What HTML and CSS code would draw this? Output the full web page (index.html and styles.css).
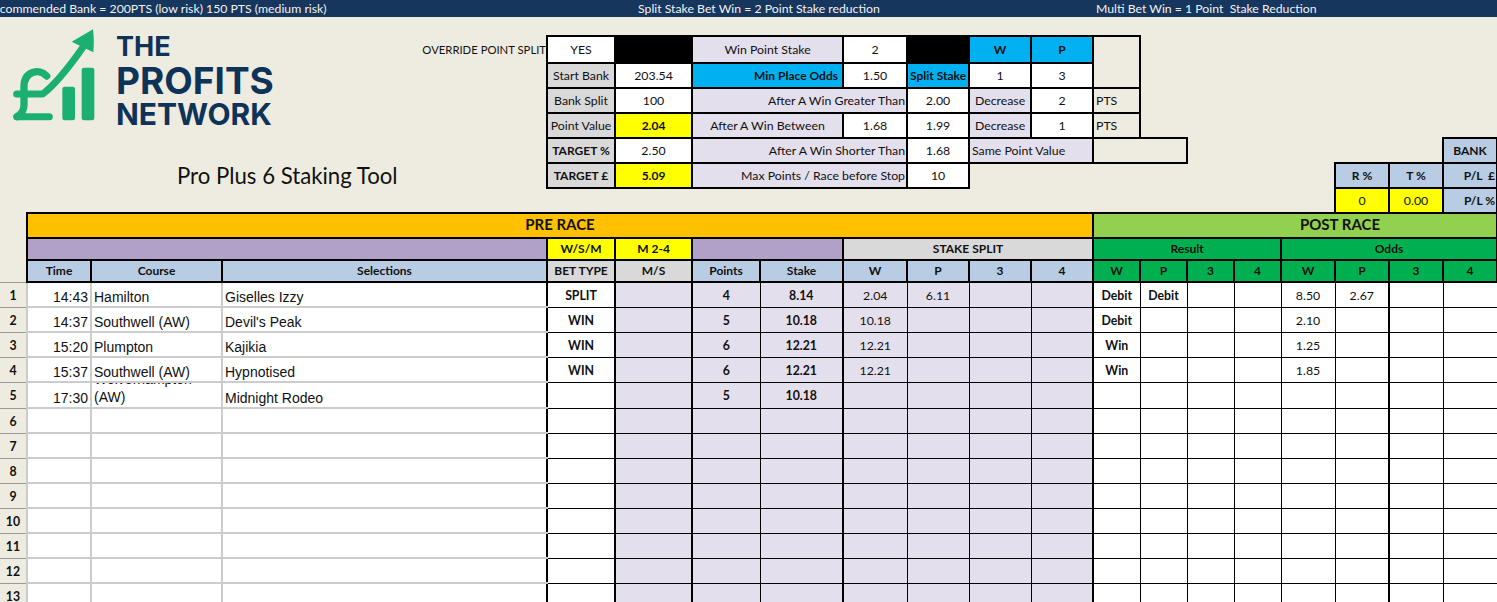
FILE: index.html
```html
<!DOCTYPE html>
<html lang="en">
<head>
<meta charset="utf-8">
<title>Pro Plus 6 Staking Tool</title>
<link rel="stylesheet" href="styles.css">
</head>
<body>
<div class="ticker">
  <div class="tick tick-a"><span>Recommended Bank = 200PTS (low risk) 150 PTS (medium risk)</span></div>
  <div class="tick tick-b">Split Stake Bet Win = 2 Point Stake reduction</div>
  <div class="tick tick-c">Multi Bet Win = 1 Point&nbsp; Stake Reduction</div>
</div>
<table class="sheet">
  <colgroup>
    <col class="w27"><col class="w64"><col class="w131"><col class="w325"><col class="w68"><col class="w77"><col class="w68"><col class="w83"><col class="w64"><col class="w62"><col class="w62"><col class="w62"><col class="w47"><col class="w47"><col class="w47"><col class="w47"><col class="w54"><col class="w54"><col class="w54"><col class="w54">
  </colgroup>
  <tbody class="panel">
    <tr class="h19">
      <td colspan="4" rowspan="8" class="brandcell">
        <div class="brand">
          <div class="logo">
            <svg class="mark" viewBox="0 0 300 330" width="100" height="110" aria-hidden="true">
              <path d="M140 168C128 156 112 152 100 157C80 163 72 180 72 200V255C72 272 64 282 52 290" fill="none" stroke="#1BB071" stroke-width="22" stroke-linecap="round"/>
              <path d="M50 290H148" fill="none" stroke="#1BB071" stroke-width="21" stroke-linecap="round"/>
              <path d="M50 222H128C170 190 215 130 250 80" fill="none" stroke="#1BB071" stroke-width="21" stroke-linecap="round" stroke-linejoin="round"/>
              <path d="M215 65L279 28C282 50 282 75 280 97Z" fill="#1BB071"/>
              <rect x="187" y="200" width="38" height="101" rx="7" fill="#1BB071"/>
              <rect x="245" y="143" width="38" height="158" rx="7" fill="#1BB071"/>
            </svg>
            <div class="wordmark">
              <div class="wm-the">THE</div>
              <div class="wm-profits">PROFITS</div>
              <div class="wm-network">NETWORK</div>
            </div>
          </div>
          <div class="override">OVERRIDE POINT SPLIT</div>
          <div class="title">Pro Plus 6 Staking Tool</div>
        </div>
      </td>
      <td colspan="16"></td>
    </tr>
    <tr class="h26">
      <td class="b c white">YES</td>
      <td class="b blk"></td>
      <td colspan="2" class="b c lav">Win Point Stake</td>
      <td class="b c white">2</td>
      <td class="b blk"></td>
      <td class="b c sky strong">W</td>
      <td class="b c sky strong">P</td>
      <td rowspan="2" class="b"></td>
      <td colspan="7"></td>
    </tr>
    <tr class="h25">
      <td class="b c grey">Start Bank</td>
      <td class="b c white">203.54</td>
      <td colspan="2" class="b r sky strong odds">Min Place Odds</td>
      <td class="b c white">1.50</td>
      <td class="b c sky strong">Split Stake</td>
      <td class="b c white">1</td>
      <td class="b c white">3</td>
      <td colspan="7"></td>
    </tr>
    <tr class="h25">
      <td class="b c grey">Bank Split</td>
      <td class="b c white">100</td>
      <td colspan="3" class="b r lav">After A Win Greater Than</td>
      <td class="b c white">2.00</td>
      <td class="b c lav">Decrease</td>
      <td class="b c white">2</td>
      <td class="b l">PTS</td>
      <td colspan="7"></td>
    </tr>
    <tr class="h25">
      <td class="b c grey">Point Value</td>
      <td class="b c yellow strong">2.04</td>
      <td colspan="2" class="b c lav">After A Win Between</td>
      <td class="b c white">1.68</td>
      <td class="b c white">1.99</td>
      <td class="b c lav">Decrease</td>
      <td class="b c white">1</td>
      <td class="b l">PTS</td>
      <td colspan="7"></td>
    </tr>
    <tr class="h25">
      <td class="b c grey strong">TARGET %</td>
      <td class="b c white">2.50</td>
      <td colspan="3" class="b r lav">After A Win Shorter Than</td>
      <td class="b c white">1.68</td>
      <td colspan="2" class="b l lav">Same Point Value</td>
      <td colspan="2" class="b"></td>
      <td colspan="5"></td>
      <td class="b c steel strong">BANK</td>
    </tr>
    <tr class="h25">
      <td class="b c grey strong">TARGET £</td>
      <td class="b c yellow strong">5.09</td>
      <td colspan="3" class="b r lav">Max Points / Race before Stop</td>
      <td class="b c white">10</td>
      <td colspan="7"></td>
      <td class="b c steel strong">R %</td>
      <td class="b c steel strong">T %</td>
      <td class="b r steel strong">P/L&nbsp; £</td>
    </tr>
    <tr class="h25">
      <td colspan="13"></td>
      <td class="b c yellow">0</td>
      <td class="b c yellow">0.00</td>
      <td class="b r steel strong">P/L %</td>
    </tr>
  </tbody>
  <tbody class="heads">
    <tr class="h25">
      <td></td>
      <td colspan="11" class="b c orange banner">PRE RACE</td>
      <td colspan="8" class="b c lime banner banner-post">POST RACE</td>
    </tr>
    <tr class="h22">
      <td></td>
      <td colspan="3" class="b purple"></td>
      <td class="b c yellow strong">W/S/M</td>
      <td class="b c yellow strong">M 2-4</td>
      <td colspan="2" class="b purple"></td>
      <td colspan="4" class="b c grey strong">STAKE SPLIT</td>
      <td colspan="4" class="b c green strong">Result</td>
      <td colspan="4" class="b c green strong">Odds</td>
    </tr>
    <tr class="h22">
      <td></td>
      <th class="b steel">Time</th><th class="b steel">Course</th><th class="b steel">Selections</th>
      <th class="b grey">BET TYPE</th><th class="b grey">M/S</th>
      <th class="b steel">Points</th><th class="b steel">Stake</th>
      <th class="b steel">W</th><th class="b steel">P</th><th class="b steel">3</th><th class="b steel">4</th>
      <th class="b green">W</th><th class="b green">P</th><th class="b green">3</th><th class="b green">4</th>
      <th class="b green">W</th><th class="b green">P</th><th class="b green">3</th><th class="b green">4</th>
    </tr>
  </tbody>
  <tbody class="rows">
    <tr><td>1</td><td>14:43</td><td>Hamilton</td><td>Giselles Izzy</td><td>SPLIT</td><td></td><td>4</td><td>8.14</td><td>2.04</td><td>6.11</td><td></td><td></td><td>Debit</td><td>Debit</td><td></td><td></td><td>8.50</td><td>2.67</td><td></td><td></td></tr>
    <tr><td>2</td><td>14:37</td><td>Southwell (AW)</td><td>Devil's Peak</td><td>WIN</td><td></td><td>5</td><td>10.18</td><td>10.18</td><td></td><td></td><td></td><td>Debit</td><td></td><td></td><td></td><td>2.10</td><td></td><td></td><td></td></tr>
    <tr><td>3</td><td>15:20</td><td>Plumpton</td><td>Kajikia</td><td>WIN</td><td></td><td>6</td><td>12.21</td><td>12.21</td><td></td><td></td><td></td><td>Win</td><td></td><td></td><td></td><td>1.25</td><td></td><td></td><td></td></tr>
    <tr><td>4</td><td>15:37</td><td>Southwell (AW)</td><td>Hypnotised</td><td>WIN</td><td></td><td>6</td><td>12.21</td><td>12.21</td><td></td><td></td><td></td><td>Win</td><td></td><td></td><td></td><td>1.85</td><td></td><td></td><td></td></tr>
    <tr><td>5</td><td>17:30</td><td><div class="clip"><div>Wolverhampton</div><div>(AW)</div></div></td><td>Midnight Rodeo</td><td></td><td></td><td>5</td><td>10.18</td><td></td><td></td><td></td><td></td><td></td><td></td><td></td><td></td><td></td><td></td><td></td><td></td></tr>
    <tr><td>6</td><td></td><td></td><td></td><td></td><td></td><td></td><td></td><td></td><td></td><td></td><td></td><td></td><td></td><td></td><td></td><td></td><td></td><td></td><td></td></tr>
    <tr><td>7</td><td></td><td></td><td></td><td></td><td></td><td></td><td></td><td></td><td></td><td></td><td></td><td></td><td></td><td></td><td></td><td></td><td></td><td></td><td></td></tr>
    <tr><td>8</td><td></td><td></td><td></td><td></td><td></td><td></td><td></td><td></td><td></td><td></td><td></td><td></td><td></td><td></td><td></td><td></td><td></td><td></td><td></td></tr>
    <tr><td>9</td><td></td><td></td><td></td><td></td><td></td><td></td><td></td><td></td><td></td><td></td><td></td><td></td><td></td><td></td><td></td><td></td><td></td><td></td><td></td></tr>
    <tr><td>10</td><td></td><td></td><td></td><td></td><td></td><td></td><td></td><td></td><td></td><td></td><td></td><td></td><td></td><td></td><td></td><td></td><td></td><td></td><td></td></tr>
    <tr><td>11</td><td></td><td></td><td></td><td></td><td></td><td></td><td></td><td></td><td></td><td></td><td></td><td></td><td></td><td></td><td></td><td></td><td></td><td></td><td></td></tr>
    <tr><td>12</td><td></td><td></td><td></td><td></td><td></td><td></td><td></td><td></td><td></td><td></td><td></td><td></td><td></td><td></td><td></td><td></td><td></td><td></td><td></td></tr>
    <tr><td>13</td><td></td><td></td><td></td><td></td><td></td><td></td><td></td><td></td><td></td><td></td><td></td><td></td><td></td><td></td><td></td><td></td><td></td><td></td><td></td></tr>
  </tbody>
</table>
</body>
</html>
```
FILE: styles.css
```css
html, body { margin: 0; padding: 0; height: 602px; overflow: hidden; background: #EEECE1; }
body { font-family: "Lato", "Liberation Sans", sans-serif; color: #111; width: 1497px; }

.ticker { display: flex; height: 17px; background: #17365D; color: #F2F2F2; font-size: 12.25px; line-height: 17px; white-space: nowrap; overflow: hidden; }
.tick { flex: none; overflow: hidden; }
.tick-a { width: 638px; }
.tick-a span { display: block; margin-left: -14px; }
.tick-b { width: 458px; }
.tick-c { width: 401px; }

.sheet { border-collapse: collapse; table-layout: fixed; width: 1497px; font-size: 12.3px; }
.w27 { width: 27px; } .w64 { width: 64px; } .w131 { width: 131px; } .w325 { width: 325px; }
.w68 { width: 68px; } .w77 { width: 77px; } .w83 { width: 83px; } .w62 { width: 62px; }
.w47 { width: 47px; } .w54 { width: 54px; }
.sheet td, .sheet th { padding: 0; overflow: hidden; white-space: nowrap; font-weight: 400; }

.h19 { height: 19px; } .h22 { height: 22px; } .h25 { height: 25px; } .h26 { height: 26px; }
.sheet .h22 td { padding-bottom: 2px; }
.sheet .h22 th { padding-bottom: 1px; }

.b { border: 2px solid #000; }
.c { text-align: center; }
.r { text-align: right; padding-right: 1px !important; }
.l { text-align: left; padding-left: 2px !important; }
.sheet .odds { padding-right: 4px !important; }
.sheet .strong, .sheet th { font-weight: 700; font-size: 12px; }
.white { background: #fff; }
.blk { background: #000; }
.lav { background: #E4DFEC; }
.grey { background: #D9D9D9; }
.sky { background: #00B0F0; }
.yellow { background: #FFFF00; }
.steel { background: #B8CCE4; }
.orange { background: #FFC000; }
.lime { background: #92D050; }
.purple { background: #B1A0C7; }
.green { background: #00B050; }
.sheet .banner { font-size: 15px; font-weight: 700; padding-bottom: 3px; }
.sheet .banner-post { padding-left: 90px; }

.brandcell { vertical-align: top; }
.brand { display: grid; grid-template-columns: 330px 1fr; grid-template-rows: 130px 1fr; height: 195px; }
.logo { display: flex; gap: 16px; padding-top: 3px; }
.mark { display: block; flex: none; }
.wordmark { font-family: "Inter", "Liberation Sans", sans-serif; font-weight: 700; color: #0E3358; padding-top: 12px; }
.wm-the { font-size: 27px; line-height: 30px; }
.wm-profits { font-size: 37px; line-height: 37px; }
.wm-network { font-size: 30px; line-height: 31px; }
.override { text-align: right; padding-top: 26px; font-size: 11.3px; }
.title { grid-column: 1 / 3; font-size: 22.2px; margin-left: 177px; padding-top: 15px; color: #111; }

.heads th { text-align: center; }

.rows tr { height: 25px; }
.rows td { text-align: center; background: #fff; border: 1px solid #000; font-size: 12.3px; padding-top: 1px; }
.rows td:nth-child(1) { background: #EEECE1; border: 0; border-right: 2px solid #ccc; font-weight: 700; box-shadow: inset 0 1px 0 #999; }
.rows td:nth-child(2), .rows td:nth-child(3), .rows td:nth-child(4) {
  border: 2px solid #ccc; font-family: "Liberation Sans", Arial, sans-serif; font-size: 14px; vertical-align: bottom; text-align: left; padding: 0 0 1px 2px;
}
.rows td:nth-child(2) { text-align: right; padding: 0 2px 1px 0; }
.rows td:nth-child(4) { border-right: 2px solid #000; }
.rows td:nth-child(5), .rows td:nth-child(7), .rows td:nth-child(8), .rows td:nth-child(13), .rows td:nth-child(14) { font-weight: 700; }
.rows td:nth-child(n+6):nth-child(-n+12) { background: #E4DFEC; }
.rows td:nth-child(5), .rows td:nth-child(6), .rows td:nth-child(7), .rows td:nth-child(9), .rows td:nth-child(13), .rows td:nth-child(19) { border-left-width: 2px; }
.rows td:nth-child(6), .rows td:nth-child(8), .rows td:nth-child(12) { border-right-width: 2px; }
.clip { height: 23px; overflow: hidden; display: flex; flex-direction: column; justify-content: flex-end; line-height: 18px; }
```
